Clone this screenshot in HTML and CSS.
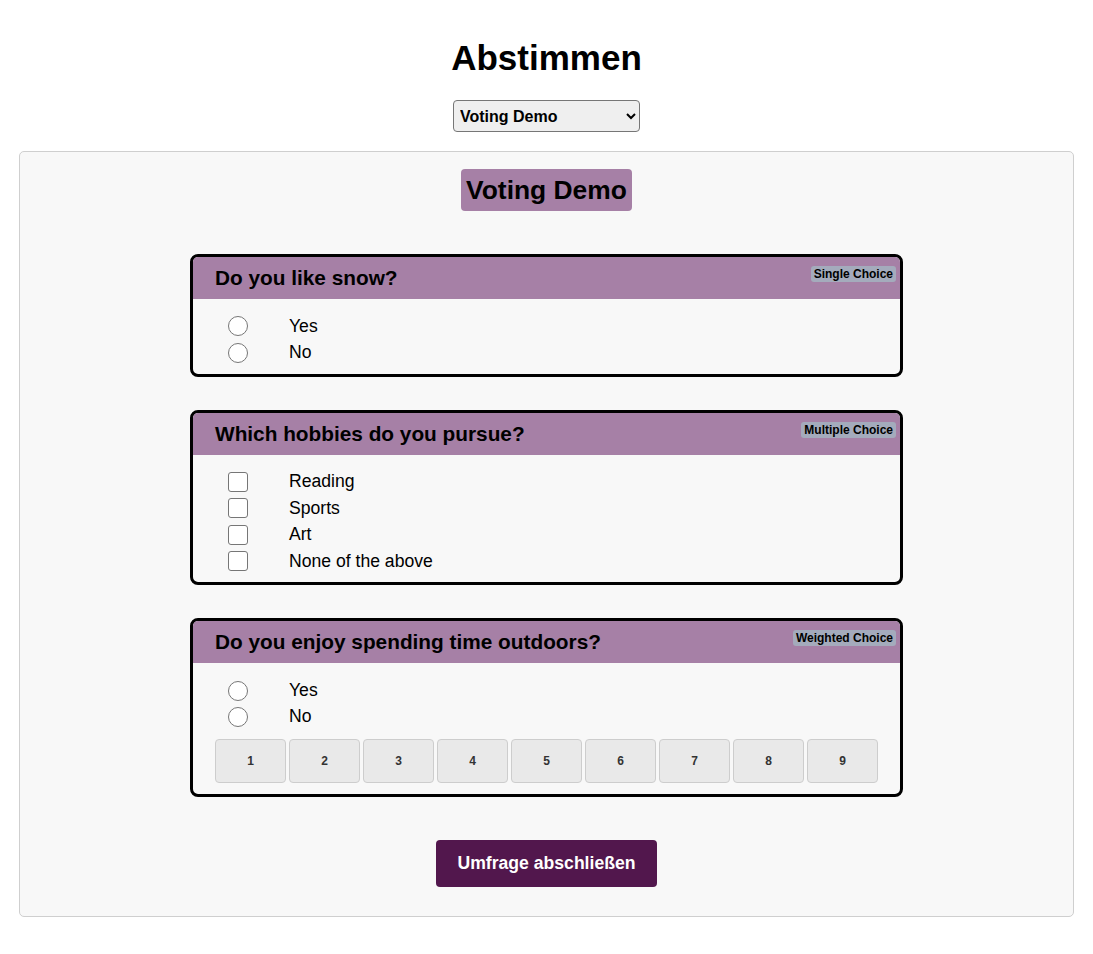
FILE: index.html
```html
<!DOCTYPE html>
<html lang="de">
<head>
<meta charset="utf-8">
<title>Abstimmen</title>
<link rel="stylesheet" href="styles.css">
</head>
<body>
<h1 class="title">Abstimmen</h1>
<select class="poll-select"><option>Voting Demo</option></select>
<main class="panel">
  <h2 class="poll-name">Voting Demo</h2>

  <section class="question">
    <div class="q-head">
      <h3 class="q-title">Do you like snow?</h3>
      <span class="badge">Single Choice</span>
    </div>
    <div class="q-body">
      <label class="opt"><input type="radio" name="q1" class="radio"><span>Yes</span></label>
      <label class="opt"><input type="radio" name="q1" class="radio"><span>No</span></label>
    </div>
  </section>

  <section class="question">
    <div class="q-head">
      <h3 class="q-title">Which hobbies do you pursue?</h3>
      <span class="badge">Multiple Choice</span>
    </div>
    <div class="q-body">
      <label class="opt"><input type="checkbox" class="check"><span>Reading</span></label>
      <label class="opt"><input type="checkbox" class="check"><span>Sports</span></label>
      <label class="opt"><input type="checkbox" class="check"><span>Art</span></label>
      <label class="opt"><input type="checkbox" class="check"><span>None of the above</span></label>
    </div>
  </section>

  <section class="question">
    <div class="q-head">
      <h3 class="q-title">Do you enjoy spending time outdoors?</h3>
      <span class="badge">Weighted Choice</span>
    </div>
    <div class="q-body">
      <label class="opt"><input type="radio" name="q3" class="radio"><span>Yes</span></label>
      <label class="opt"><input type="radio" name="q3" class="radio"><span>No</span></label>
      <div class="weights">
        <button class="w">1</button><button class="w">2</button><button class="w">3</button>
        <button class="w">4</button><button class="w">5</button><button class="w">6</button>
        <button class="w">7</button><button class="w">8</button><button class="w">9</button>
      </div>
    </div>
  </section>

  <div class="actions"><button class="submit">Umfrage abschließen</button></div>
</main>
</body>
</html>
```
FILE: styles.css
```css
* { box-sizing: border-box; }
body {
  margin: 0;
  padding: 0 19px 38px;
  background: #fff;
  font-family: "Liberation Sans", Arial, sans-serif;
  color: #000;
}
.title {
  margin: 38px 0 22px;
  text-align: center;
  font-size: 35px;
  line-height: 40px;
  font-weight: bold;
}
.poll-select {
  display: block;
  margin: 0 auto;
  width: 187px;
  height: 32px;
  font-family: "Liberation Sans", Arial, sans-serif;
  font-size: 16px;
  font-weight: bold;
  color: #000;
  background: #efefef;
  border: 1px solid #767676;
  border-radius: 4px;
  padding: 0 2px;
}
.panel {
  margin-top: 19px;
  background: #f8f8f8;
  border: 1px solid #cfcfcf;
  border-radius: 5px;
  padding: 17px 0 29px;
  display: flex;
  flex-direction: column;
  align-items: center;
}
.poll-name {
  margin: 0 0 43px;
  background: #a680a6;
  border-radius: 4px;
  padding: 5px 5px;
  font-size: 26.4px;
  line-height: 32px;
  font-weight: bold;
}
.question {
  width: 713px;
  border: 3px solid #000;
  border-radius: 8px;
  overflow: hidden;
  margin-bottom: 33px;
  background: #f8f8f8;
}
.q-head {
  position: relative;
  background: #a680a6;
  padding: 9px 22px 10px;
  height: 42px;
}
.q-title {
  margin: 0;
  font-size: 20.8px;
  line-height: 23px;
  font-weight: bold;
}
.badge {
  position: absolute;
  top: 9px;
  right: 4px;
  background: #a4abbc;
  border-radius: 3px;
  padding: 0 3px;
  font-size: 12px;
  line-height: 16px;
  font-weight: bold;
}
.q-body {
  padding: 14px 22px 8px;
}
.opt {
  display: flex;
  align-items: center;
  height: 26.4px;
  padding-left: 13px;
  font-size: 17.6px;
}
.opt span { margin-left: 41px; }
.radio, .check {
  appearance: none;
  -webkit-appearance: none;
  margin: 0;
  width: 20px;
  height: 20px;
  border: 1px solid #767676;
  background: #fff;
}
.radio { border-radius: 50%; }
.check { border-radius: 3px; }
.weights {
  display: flex;
  gap: 3px;
  margin: 9px 0 3px;
}
.w {
  flex: 1;
  height: 44px;
  background: #e9e9e9;
  border: 1px solid #cdcdcd;
  border-radius: 4px;
  font-family: "Liberation Sans", Arial, sans-serif;
  font-size: 12px;
  font-weight: bold;
  color: #333;
  padding: 0;
}
.actions {
  margin-top: 10px;
}
.submit {
  background: #52174d;
  color: #fff;
  border: none;
  border-radius: 4px;
  padding: 13px 22px;
  font-family: "Liberation Sans", Arial, sans-serif;
  font-size: 17.6px;
  line-height: 21px;
  font-weight: bold;
}
```
